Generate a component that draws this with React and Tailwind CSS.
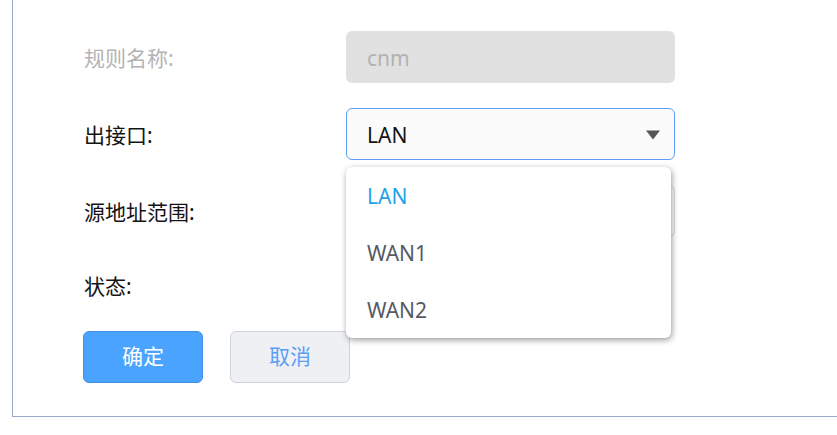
import React from 'react';

const options = ['LAN', 'WAN1', 'WAN2'];

const Label = ({ children, disabled = false }) => (
  <div className={`w-[262px] shrink-0 text-[21px] leading-none pt-[2px] ${disabled ? 'text-[#b4b4b4]' : 'text-[#141414]'}`}>
    {children}
  </div>
);

const App = () => {
  return (
    <div className="w-[837px] h-[435px] bg-white font-['Noto_Sans','Noto_Sans_CJK_SC',sans-serif] overflow-hidden">
      <div className="ml-3 w-[900px] h-[417px] border-l border-b border-[#9ca7c9] pl-[71px] pt-[31px]">
        <div className="flex flex-col">
          {/* 规则名称 */}
          <div className="flex items-center h-[52px]">
            <Label disabled>规则名称:</Label>
            <div className="w-[329px] h-[52px] rounded-md bg-[#e1e1e1] flex items-center px-[21px] pt-[3px] text-[21px] text-[#b2b2b2]">
              cnm
            </div>
          </div>

          {/* 出接口 */}
          <div className="flex items-center h-[52px] mt-[25px]">
            <Label>出接口:</Label>
            <div className="relative">
              <div className="w-[329px] h-[52px] rounded-md border border-[#5d9ff5] bg-[#fbfbfb] flex items-center justify-between pl-[20px] pr-[14px] text-[21px] text-[#141414]">
                <span className="pt-[3px]">LAN</span>
                <svg width="14" height="10" viewBox="0 0 14 10" className="mt-[1px]">
                  <polygon points="0,0.5 14,0.5 7,9.5" fill="#555555" />
                </svg>
              </div>

              {/* dropdown menu */}
              <div className="absolute left-0 top-[59px] z-10 w-[325px] rounded-md bg-white shadow-[1px_2px_6px_rgba(0,0,0,0.4)] flex flex-col">
                {options.map((opt, i) => (
                  <div
                    key={opt}
                    className={`h-[57px] flex items-center px-[21px] pt-[2px] text-[21px] ${i === 0 ? 'text-[#1fa3e6]' : 'text-[#555a63]'}`}
                  >
                    {opt}
                  </div>
                ))}
              </div>
            </div>
          </div>

          {/* 源地址范围 */}
          <div className="flex items-center h-[52px] mt-[25px]">
            <Label>源地址范围:</Label>
            <div className="w-[329px] h-[52px] rounded-md border border-[#d9dce2] bg-white" />
          </div>

          {/* 状态 */}
          <div className="flex items-center h-[50px] mt-[23px]">
            <Label>状态:</Label>
          </div>

          {/* buttons */}
          <div className="flex items-center gap-[27px] mt-[21px] -ml-px">
            <button className="w-[120px] h-[52px] rounded-md bg-[#4aa3ff] border border-[#3f8fe6] text-white text-[21px]">
              确定
            </button>
            <button className="w-[120px] h-[52px] rounded-md bg-[#eef0f3] border border-[#cfd3d9] text-[#5d9ef5] text-[21px]">
              取消
            </button>
          </div>
        </div>
      </div>
    </div>
  );
};

export default App;
